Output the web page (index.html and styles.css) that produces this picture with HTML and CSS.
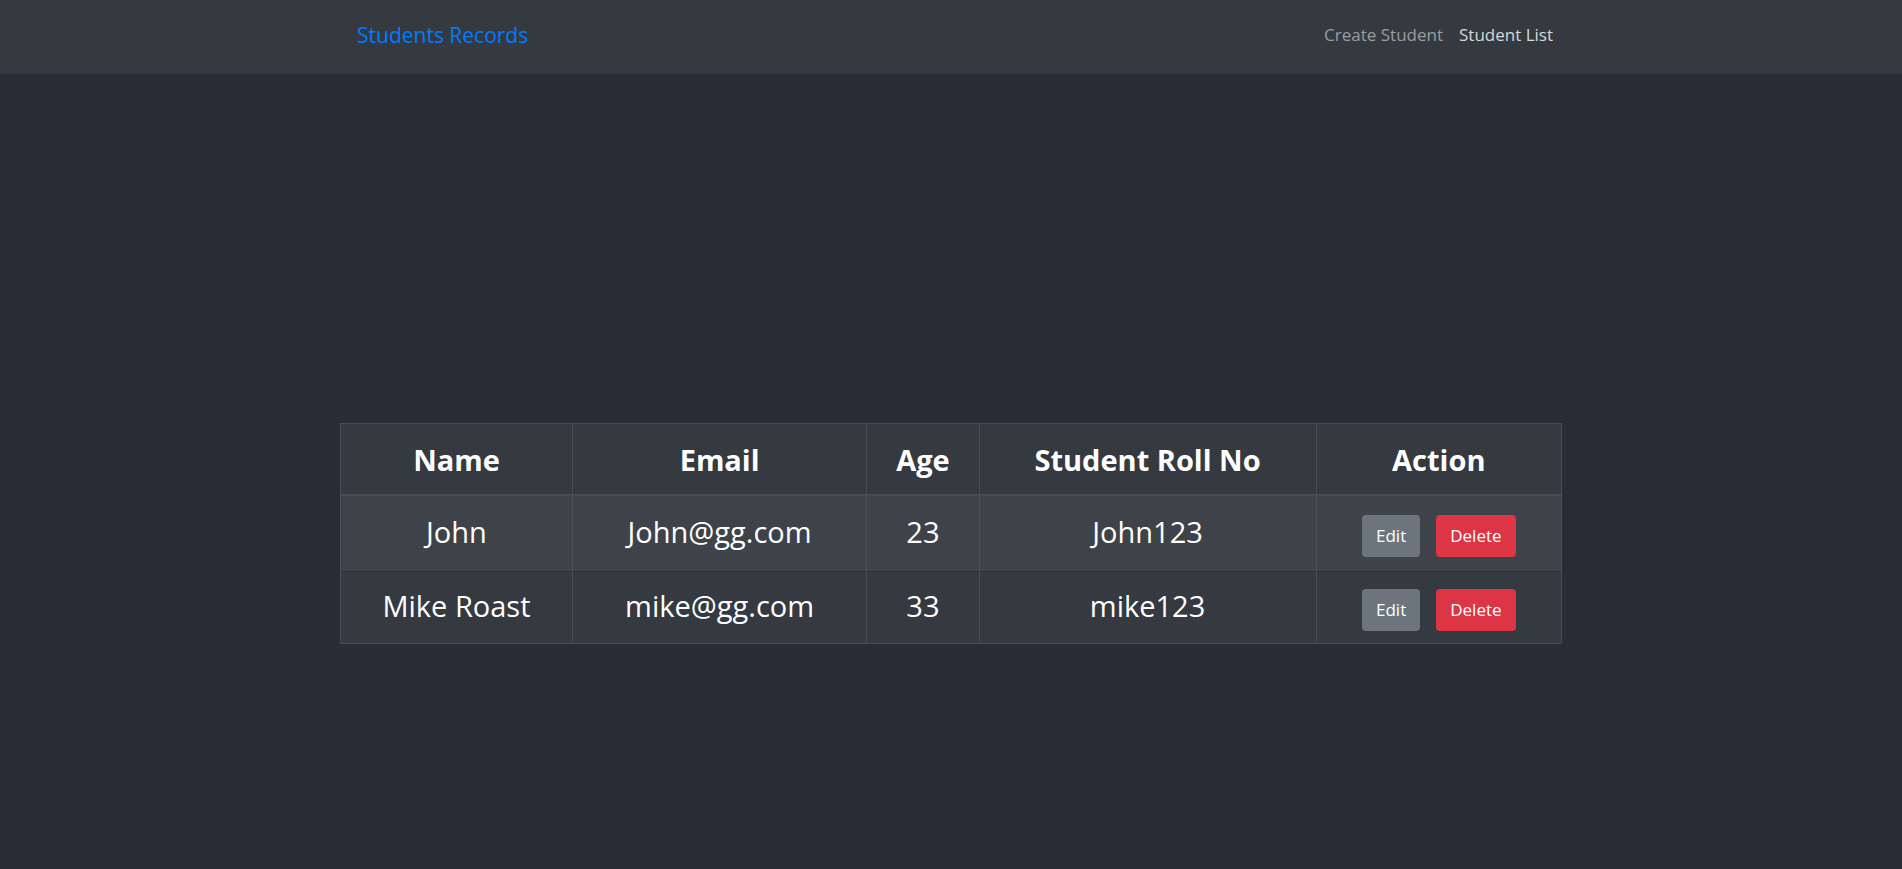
FILE: index.html
```html
<!DOCTYPE html>
<html lang="en">
<head>
<meta charset="utf-8">
<meta name="viewport" content="width=device-width, initial-scale=1">
<title>Students Records</title>
<link rel="stylesheet" href="styles.css">
</head>
<body>
<header class="navbar">
  <div class="navbar-inner">
    <a class="brand" href="#">Students Records</a>
    <nav class="nav">
      <a class="nav-link" href="#create">Create Student</a>
      <a class="nav-link active" href="#list">Student List</a>
    </nav>
  </div>
</header>
<main class="content">
  <table class="students">
    <colgroup><col class="col-name"><col class="col-email"><col class="col-age"><col class="col-roll"><col class="col-action"></colgroup>
    <thead>
      <tr><th scope="col">Name</th><th scope="col">Email</th><th scope="col">Age</th><th scope="col">Student Roll No</th><th scope="col">Action</th></tr>
    </thead>
    <tbody>
      <tr>
        <td>John</td><td>John@gg.com</td><td>23</td><td>John123</td>
        <td><div class="actions"><button class="btn btn-edit" type="button">Edit</button><button class="btn btn-delete" type="button">Delete</button></div></td>
      </tr>
      <tr>
        <td>Mike Roast</td><td>mike@gg.com</td><td>33</td><td>mike123</td>
        <td><div class="actions"><button class="btn btn-edit" type="button">Edit</button><button class="btn btn-delete" type="button">Delete</button></div></td>
      </tr>
    </tbody>
  </table>
</main>
</body>
</html>
```
FILE: styles.css
```css
* {
  box-sizing: border-box;
}

body {
  margin: 0;
  min-height: 100vh;
  display: flex;
  flex-direction: column;
  background: #282c34;
  color: #fff;
  font-family: "Segoe UI", "Open Sans", "Noto Sans", sans-serif;
}

a {
  text-decoration: none;
}

.navbar {
  padding: 15px 16px 19px;
  background: #343a40;
}

.navbar-inner {
  display: flex;
  align-items: center;
  justify-content: space-between;
  max-width: 1212px;
  margin: 0 auto;
  padding: 0 4px 0 12px;
}

.brand {
  color: #007bff;
  font-size: 21px;
  line-height: 40px;
}

.nav {
  display: flex;
  gap: 16px;
}

.nav-link {
  color: #9a9da0;
  font-size: 17px;
  line-height: 40px;
}

.nav-link.active {
  color: #d6d8d9;
}

.content {
  flex: 1;
  display: flex;
  align-items: center;
  justify-content: center;
  padding: 123px 16px 0;
}

.students {
  width: 100%;
  max-width: 1222px;
  table-layout: fixed;
  border-collapse: collapse;
  background: #343a40;
  font-size: 29px;
  line-height: 44px;
  text-align: center;
}

.col-name { width: 19%; }
.col-email { width: 24.1%; }
.col-age { width: 9.2%; }
.col-roll { width: 27.6%; }
.col-action { width: 20.1%; }

.students th,
.students td {
  border: 1px solid #454d55;
}

.students th {
  padding: 14px 8px 12px;
  font-weight: 700;
  border-bottom-width: 2px;
}

.students td {
  padding: 14px 8px 15px;
}

.students tbody tr:nth-child(odd) {
  background: #3e4349;
}

.actions {
  display: flex;
  justify-content: center;
  gap: 16px;
  padding-top: 5px;
  margin-bottom: -3px;
}

.btn {
  height: 42px;
  padding: 0 14px;
  border: 0;
  border-radius: 4px;
  color: #fff;
  font-family: inherit;
  font-size: 17px;
  line-height: 24px;
}

.btn-edit {
  background: #6c757d;
}

.btn-delete {
  background: #dc3545;
}
```
